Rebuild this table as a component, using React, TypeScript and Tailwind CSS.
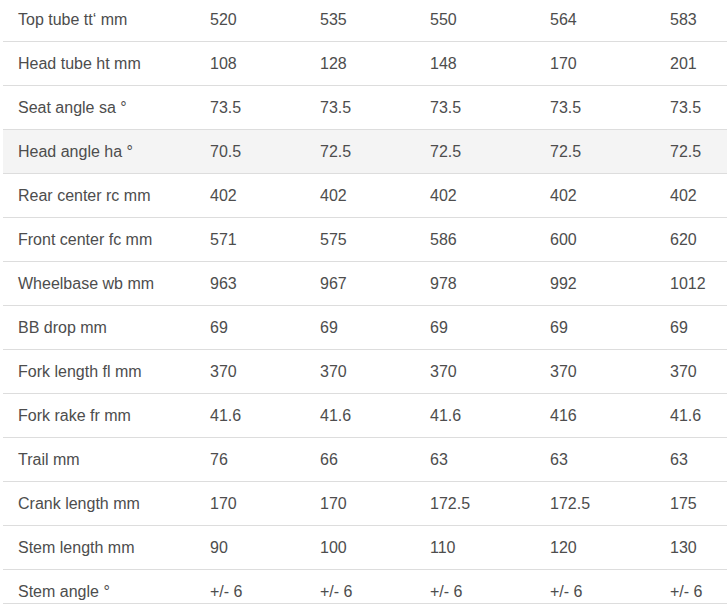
const rows: [string, string[]][] = [
  ['Top tube tt‘ mm', ['520', '535', '550', '564', '583']],
  ['Head tube ht mm', ['108', '128', '148', '170', '201']],
  ['Seat angle sa °', ['73.5', '73.5', '73.5', '73.5', '73.5']],
  ['Head angle ha °', ['70.5', '72.5', '72.5', '72.5', '72.5']],
  ['Rear center rc mm', ['402', '402', '402', '402', '402']],
  ['Front center fc mm', ['571', '575', '586', '600', '620']],
  ['Wheelbase wb mm', ['963', '967', '978', '992', '1012']],
  ['BB drop mm', ['69', '69', '69', '69', '69']],
  ['Fork length fl mm', ['370', '370', '370', '370', '370']],
  ['Fork rake fr mm', ['41.6', '41.6', '41.6', '416', '41.6']],
  ['Trail mm', ['76', '66', '63', '63', '63']],
  ['Crank length mm', ['170', '170', '172.5', '172.5', '175']],
  ['Stem length mm', ['90', '100', '110', '120', '130']],
  ['Stem angle °', ['+/- 6', '+/- 6', '+/- 6', '+/- 6', '+/- 6']],
];

export default function App() {
  return (
    <div className="w-[727px] h-[604px] overflow-hidden bg-white pl-[3px]">
      <div className="h-[604px] overflow-hidden border-b border-[#dddddd]">
        <table
          className="-mt-[3px] w-[724px] table-fixed border-collapse text-[16px] text-[#4d4d4d]"
          style={{ fontFamily: '"Liberation Sans", Arial, sans-serif' }}
        >
          <colgroup>
            <col className="w-[192px]" />
            <col className="w-[110px]" />
            <col className="w-[110px]" />
            <col className="w-[120px]" />
            <col className="w-[120px]" />
            <col className="w-[72px]" />
          </colgroup>
          <tbody>
            {rows.map(([label, values], i) => (
              <tr
                key={label}
                className={`h-[44px] border-b border-[#dddddd] ${i === 3 ? 'bg-[#f4f4f4]' : ''}`}
              >
                <td className="px-[15px] pt-[2px] align-middle whitespace-nowrap">{label}</td>
                {values.map((v, j) => (
                  <td key={j} className="px-[15px] pt-[2px] align-middle whitespace-nowrap">
                    {v}
                  </td>
                ))}
              </tr>
            ))}
          </tbody>
        </table>
      </div>
    </div>
  );
}
